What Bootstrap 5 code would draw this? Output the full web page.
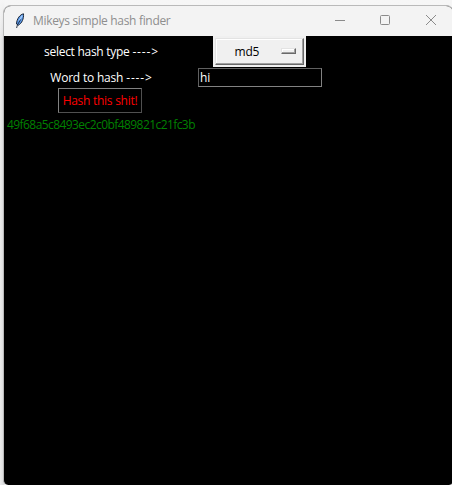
<!DOCTYPE html>
<html lang="en">
<head>
<meta charset="utf-8">
<title>Mikeys simple hash finder</title>
<link href="https://cdn.jsdelivr.net/npm/bootstrap@5.3.0/dist/css/bootstrap.min.css" rel="stylesheet">
<style>
  html, body { height: 100%; overflow: hidden; }
  body { background: linear-gradient(#f6f6f6, rgba(246,246,246,0) 40px), linear-gradient(90deg, #ececec, #d8d9db 4px, #f4f4f4 5px); padding: 5px 0 0 3px; font: 12px/16px "Open Sans", "Noto Sans", sans-serif; }
  .app-window { width: 451px; height: 480px; border: 1px solid #b9b9b9; border-bottom: 0; border-radius: 8px 8px 5px 5px; background: #000; overflow: hidden; }
  .title-strip { height: 30px; background: #f3f3f3; color: #8e8e8e; padding-left: 10px; }
  .title-text { margin-left: 7px; letter-spacing: -.32px; }
  .controls { margin-left: auto; margin-right: 15px; }
  .client { display: grid; grid-template-columns: 194px 124px; grid-template-rows: 32px 20px 25px 23px; color: #fff; }
  .client > * { white-space: nowrap; }
  .hash-select { width: 93px; height: 31px; margin-right: 2px; padding: 2px; background: #f0f0f0; }
  .hash-face { height: 27px; border: 1px solid; border-color: #e3e3e3 #696969 #696969 #e3e3e3; box-shadow: inset -1px -1px #a0a0a0, inset 1px 1px #fff; color: #000; padding: 0 7px 0 19px; letter-spacing: -.2px; }
  .indicator { width: 15px; height: 6px; margin-bottom: 1px; border: 1px solid; border-color: #e3e3e3 #696969 #696969 #e3e3e3; box-shadow: inset -1px -1px #a0a0a0, inset 1px 1px #fff; }
  .word-input { width: 124px; height: 19px; padding: 0 1px; border: 1px solid; border-color: #606060 #828282 #828282 #606060; border-radius: 0; background: #000; color: #fff; font: inherit; }
  .hash-btn { width: 84px; height: 25px; margin-right: 2px; border: 1px solid; border-color: #828282 #505050 #505050 #828282; border-radius: 0; background: #000; color: #f00; padding: 1px 0 0; font: inherit; }
  .digest { color: #008000; padding: 1px 0 0 3px; }
  .t-type { letter-spacing: -.28px; }
  .t-word { letter-spacing: -.2px; }
  .hash-btn.t-btn { letter-spacing: -.27px; }
  .t-digest { letter-spacing: -.57px; }
  .arrow { letter-spacing: .85px; margin-right: -1px; }
</style>
</head>
<body>
<main class="app-window">
  <header class="title-strip d-flex align-items-center">
    <svg width="12" height="18" viewBox="0 0 12 18" aria-hidden="true">
      <path d="M9.5 1.8C6 2.6 2.8 6.5 2.5 12L4.4 13.2C7.9 11.2 9.9 6.8 9.5 1.8Z" fill="#5c9aeb" stroke="#1c2738" stroke-width="1"/>
      <path d="M8.2 3.6L5 9" stroke="#a9d0fa" stroke-width="1.2"/>
      <path d="M6.6 7.5L3.4 13L2.6 16" fill="none" stroke="#152238" stroke-width=".9"/>
    </svg>
    <span class="title-text">Mikeys simple hash finder</span>
    <svg class="controls" width="104" height="12" viewBox="0 0 104 12" fill="none" stroke="#8b8b8b" aria-hidden="true">
      <path d="M1 5.5h10"/>
      <rect x="46.5" y=".5" width="9" height="9" rx="1"/>
      <path d="M92 0l10 10M102 0L92 10"/>
    </svg>
  </header>
  <section class="client">
    <div class="d-flex align-items-center justify-content-center"><span class="t-type">select hash type <span class="arrow">----&gt;</span></span></div>
    <div class="d-flex justify-content-center">
      <div class="hash-select"><div class="hash-face d-flex align-items-center justify-content-between"><span>md5</span><span class="indicator"></span></div></div>
    </div>
    <div class="d-flex align-items-center justify-content-center"><span class="t-word">Word to hash <span class="arrow">----&gt;</span></span></div>
    <div><input class="word-input d-block" value="hi" aria-label="Word to hash"></div>
    <div class="d-flex justify-content-center"><button class="hash-btn t-btn" type="button">Hash this shit!</button></div>
    <div></div>
    <div class="digest d-flex align-items-center"><span class="t-digest">49f68a5c8493ec2c0bf489821c21fc3b</span></div>
  </section>
</main>
<script src="https://cdn.jsdelivr.net/npm/bootstrap@5.3.0/dist/js/bootstrap.bundle.min.js"></script>
</body>
</html>
